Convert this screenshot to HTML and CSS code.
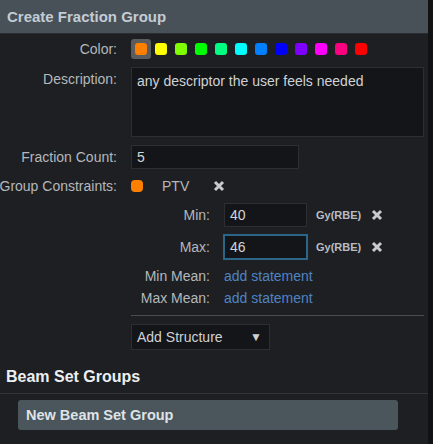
FILE: index.html
```html
<!DOCTYPE html>
<html>
<head>
<meta charset="utf-8">
<link rel="stylesheet" href="styles.css">
</head>
<body>
<div class="panel">
  <div class="header">Create Fraction Group</div>
  <div class="form">
    <div class="label">Color:</div>
    <div class="swatches">
      <span class="sw selected"><i style="background:#ff7f00"></i></span>
      <span class="sw"><i style="background:#ffff00"></i></span>
      <span class="sw"><i style="background:#80ff00"></i></span>
      <span class="sw"><i style="background:#00ff00"></i></span>
      <span class="sw"><i style="background:#00ff80"></i></span>
      <span class="sw"><i style="background:#00ffff"></i></span>
      <span class="sw"><i style="background:#0080ff"></i></span>
      <span class="sw"><i style="background:#0000ff"></i></span>
      <span class="sw"><i style="background:#8000ff"></i></span>
      <span class="sw"><i style="background:#ff00ff"></i></span>
      <span class="sw"><i style="background:#ff0080"></i></span>
      <span class="sw"><i style="background:#ff0000"></i></span>
    </div>

    <div class="label top">Description:</div>
    <div class="textarea">any descriptor the user feels needed</div>

    <div class="label">Fraction Count:</div>
    <div class="input count">5</div>

    <div class="label">Group Constraints:</div>
    <div class="constraint">
      <span class="dot"></span>
      <span class="ptv">PTV</span>
      <svg class="xicon" width="12" height="12" viewBox="0 0 12 12"><path d="M2 2 L10 10 M10 2 L2 10" stroke="#c9cacb" stroke-width="3" fill="none"/></svg>
    </div>

    <div></div>
    <div class="sub">
      <div class="slabel">Min:</div>
      <div class="input dose">40</div>
      <div class="unit">Gy(RBE)</div>
      <svg class="xicon" width="12" height="12" viewBox="0 0 12 12"><path d="M2 2 L10 10 M10 2 L2 10" stroke="#c9cacb" stroke-width="3" fill="none"/></svg>

      <div class="slabel">Max:</div>
      <div class="input dose focus">46</div>
      <div class="unit">Gy(RBE)</div>
      <svg class="xicon" width="12" height="12" viewBox="0 0 12 12"><path d="M2 2 L10 10 M10 2 L2 10" stroke="#c9cacb" stroke-width="3" fill="none"/></svg>

      <div class="slabel">Min Mean:</div>
      <div class="link">add statement</div>

      <div class="slabel tight">Max Mean:</div>
      <div class="link tight">add statement</div>
    </div>

    <div></div>
    <div class="rule"></div>

    <div></div>
    <div class="select"><span>Add Structure</span><span class="caret">&#9660;</span></div>
  </div>

  <div class="section">Beam Set Groups</div>
  <div class="section-body">
    <div class="button">New Beam Set Group</div>
  </div>
</div>
</body>
</html>
```

FILE: styles.css
```css
html, body {
  margin: 0;
  padding: 0;
  background: #111214;
  font-family: "Liberation Sans", Arial, sans-serif;
  font-size: 14px;
}

.panel {
  width: 428px;
  height: 444px;
  background: #1e1f22;
  overflow: hidden;
}

.header {
  height: 34px;
  box-sizing: border-box;
  background: #495158;
  border-bottom: 1px solid #2a2d31;
  color: #c3ccd4;
  font-weight: bold;
  font-size: 15px;
  line-height: 33px;
  padding-left: 7px;
}

.form {
  display: grid;
  grid-template-columns: 117px 293px;
  column-gap: 14px;
  row-gap: 8px;
  padding-top: 5px;
  align-items: center;
}

.label {
  display: flex;
  justify-content: flex-end;
  color: #b4b8bc;
  white-space: nowrap;
  line-height: 18px;
}

.label.top {
  align-self: start;
  padding-top: 3px;
}

.swatches {
  display: flex;
  height: 20px;
}

.sw {
  width: 20px;
  height: 20px;
  display: flex;
  align-items: center;
  justify-content: center;
  border-radius: 3px;
}

.sw.selected {
  background: #5b5c5e;
}

.sw i {
  display: block;
  width: 12px;
  height: 12px;
  border-radius: 3px;
}

.textarea {
  height: 70px;
  box-sizing: border-box;
  background: #141518;
  border: 1px solid #2c2e31;
  color: #cfd2d5;
  padding: 4px 5px;
  line-height: 18px;
}

.input {
  box-sizing: border-box;
  height: 24px;
  background: #141518;
  border: 1px solid #2c2e31;
  color: #d3d6d9;
  padding: 0 5px;
  line-height: 22px;
}

.input.count {
  width: 168px;
}

.constraint {
  display: flex;
  align-items: center;
  height: 18px;
}

.dot {
  width: 12px;
  height: 12px;
  border-radius: 4px;
  background: #ff7f00;
}

.ptv {
  color: #b4b8bc;
  margin-left: 19px;
  line-height: 18px;
}

.xicon {
  display: block;
}

.constraint .xicon {
  margin-left: 24px;
}

.sub {
  display: grid;
  grid-template-columns: 79px auto auto auto;
  column-gap: 0;
  row-gap: 8px;
  align-items: center;
  justify-content: start;
}

.slabel {
  text-align: right;
  color: #b4b8bc;
  line-height: 18px;
  white-space: nowrap;
}

.input.dose {
  width: 83px;
  margin-left: 14px;
}

.input.focus {
  border-color: #2b6688;
  box-shadow: 0 0 0 1px #2b6688;
}

.unit {
  color: #b9bdc1;
  font-weight: bold;
  font-size: 11px;
  margin-left: 9px;
}

.sub .xicon {
  margin-left: 10px;
}

.link {
  color: #4e84c2;
  grid-column: 2 / span 3;
  line-height: 18px;
  margin-left: 14px;
}

.tight {
  margin-top: -4px;
}

.rule {
  height: 1px;
  background: #4a4c50;
}

.select {
  width: 139px;
  height: 26px;
  box-sizing: border-box;
  background: #141518;
  border: 1px solid #2c2e31;
  color: #cfd2d5;
  display: flex;
  align-items: center;
  justify-content: space-between;
  padding: 0 7px 0 5px;
}

.caret {
  font-size: 12px;
  color: #cfd2d5;
}

.section {
  color: #eceff1;
  font-weight: bold;
  font-size: 16px;
  padding: 18px 0 0 6px;
  line-height: 18px;
  height: 44px;
  box-sizing: border-box;
  border-bottom: 1px solid #333539;
}

.section-body {
  padding: 6px 30px 0 18px;
}

.button {
  height: 30px;
  background: #4a565c;
  border-radius: 3px;
  color: #dfe3e6;
  font-weight: bold;
  font-size: 14.5px;
  line-height: 30px;
  padding-left: 8px;
}
```
